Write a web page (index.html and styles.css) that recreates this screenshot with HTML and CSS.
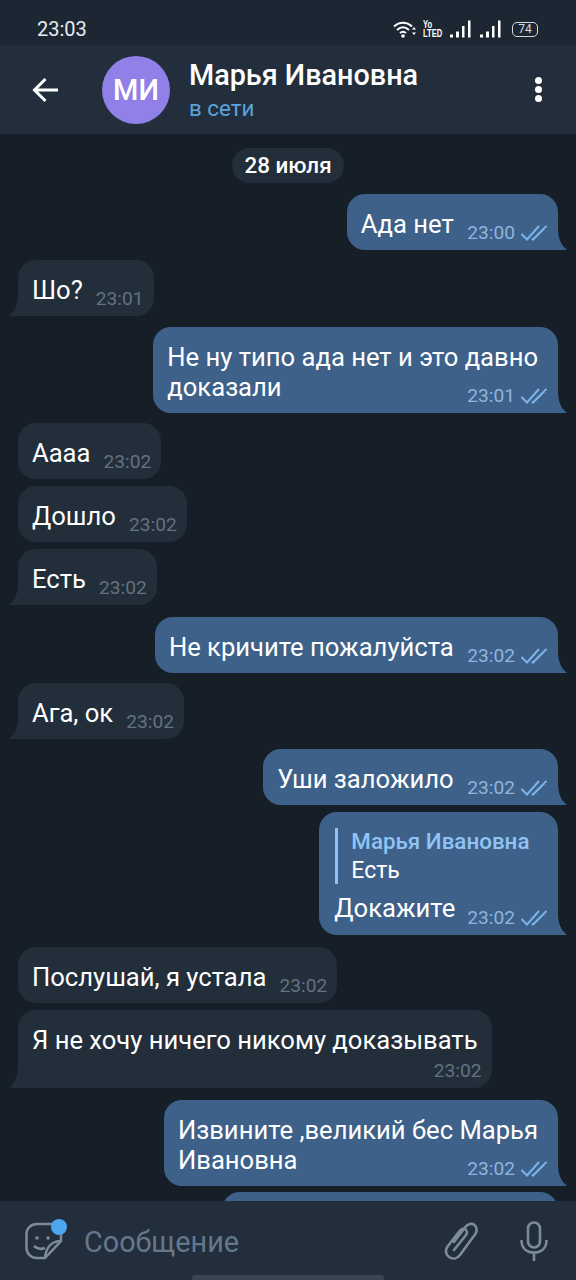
FILE: index.html
```html
<!DOCTYPE html>
<html lang="ru">

<head>
    <meta charset="UTF-8">
    <meta name="viewport" content="width=device-width, initial-scale=1.0">
    <title>Марья Ивановна</title>
    <link rel="stylesheet" href="styles.css">
</head>

<body>
    <svg class="defs" width="0" height="0">
        <symbol id="ticks" viewBox="0 0 26 18">
            <path d="M0.500 10l5.500 5.500L18 2M11 14.500l1 1L25.500 2" fill="none" stroke="currentColor" stroke-width="2" />
        </symbol>
        <symbol id="bars" viewBox="0 0 21 18">
            <path d="M0 14.500h3v3H0zM6 11.500h3v6H6zM12 6h2.500v11.500H12zM18 0.500h2.500v17H18z" fill="currentColor" />
        </symbol>
    </svg>

    <div class="status">
        <span class="clock">23:03</span>
        <div class="status-icons">
            <svg class="wifi" viewBox="0 0 24 18" width="24" height="18">
                <path d="M1 6.500c5.500-5 12.500-5 18 0M4 10c3.700-3.300 8.300-3.300 12 0M7 13c2-1.700 4-1.700 6 0" fill="none" stroke="#fff" stroke-width="2" />
                <circle cx="10" cy="16" r="1.800" fill="#fff" />
                <path d="M21 7l2 2.500h-4zM21 15l-2-2.500h4z" fill="#fff" />
            </svg>
            <span class="volte">Yo<br>LTED</span>
            <svg class="bars"><use href="#bars" /></svg>
            <svg class="bars"><use href="#bars" /></svg>
            <span class="battery">74</span>
        </div>
    </div>

    <header class="topbar">
        <svg class="back" viewBox="0 0 27 26" width="27" height="26">
            <path d="M26 13H3M13.500 2L2.500 13l11 11" fill="none" stroke="#fff" stroke-width="3" />
        </svg>
        <div class="avatar">МИ</div>
        <div class="peer">
            <div class="peer-name">Марья Ивановна</div>
            <div class="peer-status">в сети</div>
        </div>
        <div class="more"><i></i><i></i><i></i></div>
    </header>

    <main class="chat">
        <div class="date">28 июля</div>

        <div class="bubble out tail">
            <span class="text">Ада нет</span>
            <span class="meta">23:00 <svg class="ticks"><use href="#ticks" /></svg></span>
        </div>
        <div class="bubble in tail group">
            <span class="text">Шо?</span>
            <span class="meta">23:01</span>
        </div>
        <div class="bubble out tail group-wide wrap">
            <span class="text">Не ну типо ада нет и это давно<br>доказали</span>
            <span class="meta">23:01 <svg class="ticks"><use href="#ticks" /></svg></span>
        </div>
        <div class="bubble in group">
            <span class="text">Аааа</span>
            <span class="meta">23:02</span>
        </div>
        <div class="bubble in">
            <span class="text">Дошло</span>
            <span class="meta">23:02</span>
        </div>
        <div class="bubble in tail">
            <span class="text">Есть</span>
            <span class="meta">23:02</span>
        </div>
        <div class="bubble out tail group-far">
            <span class="text">Не кричите пожалуйста</span>
            <span class="meta">23:02 <svg class="ticks"><use href="#ticks" /></svg></span>
        </div>
        <div class="bubble in tail group">
            <span class="text">Ага, ок</span>
            <span class="meta">23:02</span>
        </div>
        <div class="bubble out tail group">
            <span class="text">Уши заложило</span>
            <span class="meta">23:02 <svg class="ticks"><use href="#ticks" /></svg></span>
        </div>
        <div class="bubble out tail has-reply">
            <div class="reply">
                <div class="reply-name">Марья Ивановна</div>
                <div class="reply-text">Есть</div>
            </div>
            <span class="text">Докажите</span>
            <span class="meta">23:02 <svg class="ticks"><use href="#ticks" /></svg></span>
        </div>
        <div class="bubble in group-far">
            <span class="text">Послушай, я устала</span>
            <span class="meta">23:02</span>
        </div>
        <div class="bubble in tail wrap own-line">
            <span class="text">Я не хочу ничего никому доказывать</span>
            <span class="meta">23:02</span>
        </div>
        <div class="bubble out tail group-far wrap">
            <span class="text">Извините ,великий бес Марья<br>Ивановна</span>
            <span class="meta">23:02 <svg class="ticks"><use href="#ticks" /></svg></span>
        </div>
        <div class="bubble out cut"></div>
    </main>

    <footer class="inputbar">
        <div class="sticker">
            <svg viewBox="0 0 38 38" width="38" height="38">
                <path d="M12 2h20c2 0 4 2 4 4v13L20 36h-8C6 36 1.500 31.500 1.500 26V12C1.500 6.500 6 2 12 2z" fill="none" stroke="#7c8b9a" stroke-width="2.500" />
                <path d="M36 19c-9 0-15 6-16 17" fill="none" stroke="#7c8b9a" stroke-width="2.500" />
                <circle cx="12" cy="16" r="1.800" fill="#7c8b9a" />
                <circle cx="23" cy="16" r="1.800" fill="#7c8b9a" />
                <path d="M9 24c3 3 7 3.500 11 2" fill="none" stroke="#7c8b9a" stroke-width="2.500" />
            </svg>
            <span class="sticker-dot"></span>
        </div>
        <div class="placeholder">Сообщение</div>
        <svg class="clip" viewBox="0 0 34 38" width="34" height="38">
            <path d="M10 20L21 5.500c3-4 7-4.500 9.500-2.500s3 6 .5 9.500L16 33c-3 4-7.500 4.500-11 2S1 28 3.500 24.500L16 8.500c2-2 4-2 5.500-1s2 3.500.5 5.500L10 28" fill="none" stroke="#7c8b9a" stroke-width="2.600" stroke-linecap="round" />
        </svg>
        <svg class="mic" viewBox="0 0 28 40" width="28" height="40">
            <rect x="8" y="1.500" width="12" height="25" rx="6" fill="none" stroke="#7c8b9a" stroke-width="2.600" />
            <path d="M1.500 19c0 8 5 12.500 12.500 12.500S26.500 27 26.500 19M14 31v9" fill="none" stroke="#7c8b9a" stroke-width="2.600" />
        </svg>
        <div class="home-line"></div>
    </footer>
</body>

</html>
```

FILE: styles.css
```css
* {
    box-sizing: border-box;
}

body {
    display: flex;
    flex-direction: column;
    width: 576px;
    height: 1280px;
    margin: 0;
    overflow: hidden;
    font-family: Roboto, sans-serif;
    color: #ffffff;
    background-color: #161e27;
}

.defs {
    position: absolute;
}

.status {
    display: flex;
    justify-content: space-between;
    align-items: center;
    flex: 0 0 45px;
    padding: 13px 38px 0 37px;
    background-color: #1d2733;
}

.clock {
    font-size: 20px;
    color: #e8ebee;
}

.status-icons {
    display: flex;
    align-items: center;
    gap: 7px;
}

.volte {
    width: 20px;
    margin-left: -1px;
    font-family: "Liberation Sans", sans-serif;
    font-size: 10px;
    font-weight: 700;
    line-height: 9px;
    white-space: nowrap;
    transform: scaleX(0.760);
    transform-origin: left center;
}

.bars {
    width: 21px;
    height: 18px;
    color: #ffffff;
}

.bars + .bars {
    margin-left: 2px;
}

.battery {
    width: 26px;
    height: 15px;
    margin-left: 4px;
    border: 1.500px solid #d5d9dd;
    border-radius: 5px;
    font-size: 12px;
    line-height: 12px;
    text-align: center;
    color: #d5d9dd;
}

.topbar {
    display: flex;
    align-items: center;
    flex: 0 0 89px;
    padding: 0 34px 0 32px;
    background-color: #222e3c;
}

.back {
    flex: none;
    margin-right: 43px;
}

.avatar {
    flex: none;
    width: 68px;
    height: 68px;
    margin-right: 19px;
    border-radius: 50%;
    background-color: #9180e8;
    font-size: 29px;
    font-weight: 500;
    line-height: 68px;
    text-align: center;
}

.peer {
    flex: 1;
    margin-top: 5px;
}

.peer-name {
    font-size: 28.800px;
    font-weight: 500;
    line-height: 32px;
}

.peer-status {
    font-size: 22.400px;
    line-height: 34px;
    color: #5ba3dc;
}

.more {
    display: flex;
    flex-direction: column;
    gap: 2px;
}

.more i {
    width: 7px;
    height: 7px;
    border-radius: 50%;
    background-color: #ffffff;
}

.chat {
    display: flex;
    flex-direction: column;
    flex: 1;
    min-height: 0;
    overflow: hidden;
    padding: 14px 18px 0;
    gap: 7px;
}

.date {
    align-self: center;
    height: 35px;
    margin-bottom: 4px;
    padding: 0 12px;
    border-radius: 18px;
    background-color: #222e3a;
    font-size: 22.400px;
    font-weight: 500;
    line-height: 35px;
}

.bubble {
    position: relative;
    display: flex;
    flex: none;
    column-gap: 13px;
    min-height: 56px;
    padding: 15px 10px 0 14px;
    border-radius: 18px;
    font-size: 25.600px;
    line-height: 30px;
}

.group {
    margin-top: 3px;
}

.group-wide {
    margin-top: 4px;
}

.group-far {
    margin-top: 5px;
}

.in {
    align-self: flex-start;
    background-color: #222e3a;
}

.out {
    align-self: flex-end;
    column-gap: 13.500px;
    padding-right: 11px;
    background-color: #3e6189;
}

/* tail sits under the corner of the last message of a group */
.tail::after {
    content: "";
    position: absolute;
    bottom: 0;
    width: 22px;
    height: 22px;
    background-color: inherit;
}

.out.tail {
    border-bottom-right-radius: 0;
}

.out.tail::after {
    right: -9px;
    clip-path: path("M0 0H13C13 10 16 17 21 21 22 22 21.500 22 21 22H0Z");
}

.in.tail {
    border-bottom-left-radius: 0;
}

.in.tail::after {
    left: -9px;
    clip-path: path("M22 0H9C9 10 6 17 1 21 0 22 0.500 22 1 22H22Z");
}

.text {
    white-space: nowrap;
}

.meta {
    display: flex;
    align-items: center;
    gap: 6px;
    height: 24px;
    margin-top: 12px;
    font-size: 19.200px;
    line-height: 24px;
    white-space: nowrap;
    color: #63727f;
}

.out .meta {
    color: #8db5de;
}

.ticks {
    width: 26px;
    height: 18px;
    color: #7db4ea;
}

.wrap {
    display: grid;
    padding-right: 20px;
    padding-bottom: 5px;
}

.wrap .meta {
    justify-self: end;
    margin: -18px -9px 0 0;
}

.own-line {
    padding-right: 14px;
}

.own-line .meta {
    margin: 4px -4px 0 0;
}

.has-reply {
    display: grid;
    grid-template-columns: auto auto;
    column-gap: 12px;
    padding: 16px 11px 5px 15px;
}

.reply {
    grid-column: span 2;
    margin: 0 0 9px 1px;
    padding-left: 13px;
    border-left: 3px solid #8fc4f5;
}

.reply-name {
    font-size: 22.400px;
    font-weight: 500;
    line-height: 27px;
    color: #8fc4f5;
}

.reply-text {
    margin-top: 2px;
    font-size: 23px;
    line-height: 27px;
}

.has-reply .meta {
    margin-top: 13px;
}

.cut {
    width: 336px;
    margin-top: -1px;
}

.inputbar {
    position: relative;
    display: flex;
    align-items: center;
    flex: 0 0 79px;
    padding: 0 28px 0 25px;
    background-color: #222e3c;
}

.sticker {
    position: relative;
    flex: none;
    width: 38px;
    height: 38px;
    margin-right: 21px;
}

.sticker-dot {
    position: absolute;
    top: -3px;
    right: -4px;
    width: 16px;
    height: 16px;
    border-radius: 50%;
    background-color: #4ba8ee;
}

.placeholder {
    flex: 1;
    margin-top: 3px;
    font-size: 28.800px;
    color: #64788c;
}

.clip {
    flex: none;
    margin-right: 42px;
}

.mic {
    flex: none;
}

.home-line {
    position: absolute;
    left: 192px;
    bottom: 0;
    width: 192px;
    height: 5px;
    border-radius: 3px 3px 0 0;
    background-color: #3a4550;
}
```
